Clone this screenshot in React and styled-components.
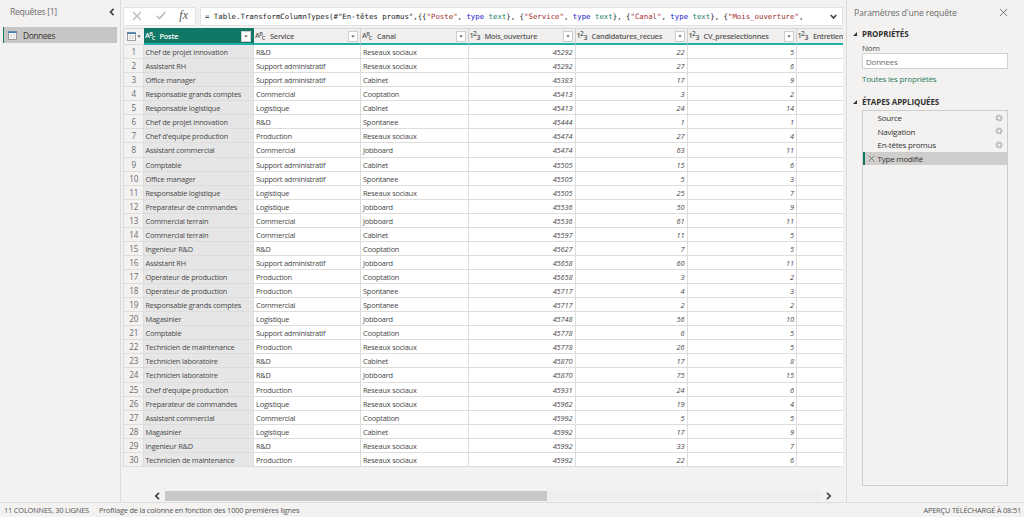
import React from 'react';
import styled, { createGlobalStyle } from 'styled-components';

const GlobalStyle = createGlobalStyle`
	* { box-sizing: border-box; }
	body {
		margin: 0;
		background: #f3f2f1;
		color: #484848;
		font-family: 'Open Sans', 'Noto Sans', sans-serif;
		font-size: 7.4px;
		overflow: hidden;
	}
`

const Window = styled.div`
	display: flex;
	flex-direction: column;
	width: 1024px;
	height: 517px;
`

const Main = styled.div`
	display: flex;
	height: 503px;
	border-bottom: 1px solid #dedddc;
`

const Sidebar = styled.div`
	width: 121px;
	padding: 0 3px;
	border-right: 1px solid #dddcdb;
`

const SidebarTitle = styled.div`
	display: flex;
	justify-content: space-between;
	align-items: center;
	height: 26px;
	padding: 0 2px 2px 7px;
	font-size: 8.7px;
	letter-spacing: -0.33px;
	color: #6b6b6b;
`

const QueryItem = styled.div`
	display: flex;
	align-items: center;
	gap: 6px;
	height: 16px;
	margin-top: 1px;
	padding-left: 4px;
	border-left: 1px solid #117865;
	background: #c8c6c4;
	font-size: 8.3px;
	letter-spacing: -0.35px;
	color: #333;
`

const Center = styled.div`
	width: 726px;
	padding: 7px 3px 0 2px;
	border-right: 1px solid #dddcdb;
`

const FormulaBar = styled.div`
	display: flex;
	justify-content: space-between;
	height: 19px;
	margin-bottom: 2px;
`

const FormulaTools = styled.div`
	display: flex;
	align-items: center;
	justify-content: space-between;
	width: 73px;
	padding: 0 7px 2px 8px;
	border: 1px solid #e3e2e1;
	background: #fff;
	font: italic 12px 'Liberation Serif', serif;
	color: #555;
`

const Formula = styled.div`
	display: flex;
	align-items: center;
	justify-content: space-between;
	width: 643px;
	padding: 0 5px 1px 4px;
	border: 1px solid #e3e2e1;
	background: #fff;
	font-family: 'DejaVu Sans Mono', monospace;
	font-size: 7.36px;
	color: #222;
	white-space: pre;
`

const Token = styled.span`
	color: ${(props) => props.$color};
`

const Grid = styled.div`
	display: grid;
	grid-template-columns: 19.5px 110.5px 107px 107.5px 107px 112px 109.5px 47px;
	grid-template-rows: 17px repeat(30, 14.07px);
	width: 720px;
	overflow: hidden;
	border-left: 1px solid #dad9d8;
`

const HeadCell = styled.div`
	display: flex;
	align-items: center;
	gap: 4px;
	min-width: 0;
	overflow: hidden;
	padding: 0 2px 0 1px;
	border-top: 1px solid ${(props) => (props.$active ? '#117865' : '#dad9d8')};
	border-right: 1px solid ${(props) => (props.$active ? '#117865' : '#d2d1d0')};
	border-bottom: 2px solid #20b2a6;
	background: ${(props) => (props.$active ? '#117865' : '#f0efee')};
	color: ${(props) => (props.$active ? '#fff' : '#5a5a5a')};
	font-weight: 600;
	font-size: 7.3px;
	letter-spacing: ${(props) => props.$spacing || -0.17}px;
	white-space: nowrap;
`

const CornerCell = styled.div`
	display: flex;
	align-items: center;
	justify-content: center;
	gap: 1px;
	border-top: 1px solid #dad9d8;
	border-bottom: 1px solid #dad9d8;
`

const Filter = styled.div`
	display: flex;
	align-items: center;
	justify-content: center;
	flex: none;
	width: 10px;
	height: 11px;
	margin-left: auto;
	border: 1px solid #cfcecd;
	background: #fff;
`

const Cell = styled.div`
	overflow: hidden;
	padding: 0 2px;
	border-right: 1px solid #dedddc;
	border-bottom: 1px solid #dedddc;
	background: ${(props) => (props.$active ? '#e6e6e6' : '#fff')};
	line-height: 14px;
	letter-spacing: -0.21px;
	white-space: nowrap;
`

const NumberCell = styled(Cell)`
	font-style: italic;
	letter-spacing: -0.1px;
	text-align: right;
`

const RowNumber = styled(Cell)`
	padding: 0 0 0 1px;
	background: #f3f2f1;
	font-size: 8.1px;
	text-align: center;
	color: #6b6b6b;
`

const ScrollRow = styled.div`
	display: flex;
	align-items: center;
	gap: 5px;
	height: 10px;
	margin: 24px 11px 0 31px;
`

const Track = styled.div`
	flex: 1;
	height: 10px;
	background: #f0efee;
`

const Thumb = styled.div`
	width: 382px;
	height: 10px;
	background: #c9c8c8;
`

const Settings = styled.div`
	width: 177px;
	padding: 0 16px 0 6px;
`

const SettingsTitle = styled.div`
	display: flex;
	align-items: center;
	justify-content: space-between;
	height: 25px;
	padding-left: 1px;
	font-size: 8.7px;
	letter-spacing: -0.15px;
	color: #6b6b6b;
`

const SectionTitle = styled.div`
	display: flex;
	align-items: center;
	gap: 5px;
	height: ${(props) => props.$height || 17}px;
	margin-top: ${(props) => props.$top || 0}px;
	font-size: 8px;
	font-weight: 700;
	letter-spacing: -0.12px;
	color: #333;
`

const SectionBody = styled.div`
	padding-left: 9px;
	font-size: 8px;
	letter-spacing: -0.22px;
`

const Label = styled.div`
	line-height: 11px;
`

const Input = styled.div`
	width: 146px;
	height: 16px;
	padding-left: 3px;
	border: 1px solid #d2d1d0;
	background: #fff;
	line-height: 15px;
	color: #707070;
`

const Link = styled.div`
	margin-top: 3px;
	line-height: 14px;
	letter-spacing: -0.2px;
	color: #287a5e;
`

const Steps = styled.div`
	width: 146px;
	height: 376px;
	border: 1px solid #cfcecd;
`

const Step = styled.div`
	display: flex;
	align-items: center;
	height: 13.5px;
	padding: 0 4px 0 3px;
	border-left: 2px solid ${(props) => (props.$active ? '#117865' : 'transparent')};
	background: ${(props) => (props.$active ? '#cfcecd' : 'transparent')};
	color: #333;
	svg:last-child {
		margin-left: ${(props) => (props.$active ? 0 : 'auto')};
	}
`

const StepMark = styled.div`
	display: flex;
	width: 9.5px;
`

const StatusBar = styled.div`
	display: flex;
	align-items: center;
	gap: 10px;
	height: 14px;
	padding: 0 3px 0 4px;
	font-size: 7.4px;
	letter-spacing: -0.18px;
	color: #555;
	span:last-child {
		margin-left: auto;
	}
`

const columns = [
	{ name: 'Poste', type: 'text' },
	{ name: 'Service', type: 'text' },
	{ name: 'Canal', type: 'text' },
	{ name: 'Mois_ouverture', type: 'number' },
	{ name: 'Candidatures_recues', type: 'number' },
	{ name: 'CV_preselectionnes', type: 'number' },
];

const rows = [
	['Chef de projet innovation', 'R&D', 'Reseaux sociaux', 45292, 22, 5],
	['Assistant RH', 'Support administratif', 'Reseaux sociaux', 45292, 27, 6],
	['Office manager', 'Support administratif', 'Cabinet', 45383, 17, 9],
	['Responsable grands comptes', 'Commercial', 'Cooptation', 45413, 3, 2],
	['Responsable logistique', 'Logistique', 'Cabinet', 45413, 24, 14],
	['Chef de projet innovation', 'R&D', 'Spontanee', 45444, 1, 1],
	["Chef d'equipe production", 'Production', 'Reseaux sociaux', 45474, 27, 4],
	['Assistant commercial', 'Commercial', 'Jobboard', 45474, 63, 11],
	['Comptable', 'Support administratif', 'Cabinet', 45505, 15, 6],
	['Office manager', 'Support administratif', 'Spontanee', 45505, 5, 3],
	['Responsable logistique', 'Logistique', 'Reseaux sociaux', 45505, 25, 7],
	['Preparateur de commandes', 'Logistique', 'Jobboard', 45536, 50, 9],
	['Commercial terrain', 'Commercial', 'Jobboard', 45536, 61, 11],
	['Commercial terrain', 'Commercial', 'Cabinet', 45597, 11, 5],
	['Ingenieur R&D', 'R&D', 'Cooptation', 45627, 7, 5],
	['Assistant RH', 'Support administratif', 'Jobboard', 45658, 60, 11],
	['Operateur de production', 'Production', 'Cooptation', 45658, 3, 2],
	['Operateur de production', 'Production', 'Spontanee', 45717, 4, 3],
	['Responsable grands comptes', 'Commercial', 'Spontanee', 45717, 2, 2],
	['Magasinier', 'Logistique', 'Jobboard', 45748, 56, 10],
	['Comptable', 'Support administratif', 'Cooptation', 45778, 6, 5],
	['Technicien de maintenance', 'Production', 'Reseaux sociaux', 45778, 26, 5],
	['Technicien laboratoire', 'R&D', 'Cabinet', 45870, 17, 8],
	['Technicien laboratoire', 'R&D', 'Jobboard', 45870, 75, 15],
	["Chef d'equipe production", 'Production', 'Reseaux sociaux', 45931, 24, 6],
	['Preparateur de commandes', 'Logistique', 'Reseaux sociaux', 45962, 19, 4],
	['Assistant commercial', 'Commercial', 'Cooptation', 45992, 5, 5],
	['Magasinier', 'Logistique', 'Cabinet', 45992, 17, 9],
	['Ingenieur R&D', 'R&D', 'Reseaux sociaux', 45992, 33, 7],
	['Technicien de maintenance', 'Production', 'Reseaux sociaux', 45992, 22, 6],
];

const formula = [
	['= Table.TransformColumnTypes(#"En-têtes promus",{{'],
	['"Poste"', '#a33030'], [', '], ['type', '#2222c8'], [' text', '#2b8066'], ['}, {'],
	['"Service"', '#a33030'], [', '], ['type', '#2222c8'], [' text', '#2b8066'], ['}, {'],
	['"Canal"', '#a33030'], [', '], ['type', '#2222c8'], [' text', '#2b8066'], ['}, {'],
	['"Mois_ouverture"', '#a33030'], [','],
];

const TypeSvg = styled.svg`
	flex: none;
	font-family: 'Open Sans', sans-serif;
	font-weight: 600;
	letter-spacing: 0;
`

const TypeIcon = ({ type }) => {
	const text = type === 'text';
	const [a, b, c] = text ? ['A', 'B', 'C'] : ['1', '2', '3'];
	return (
		<TypeSvg width="11" height="12" viewBox="0 0 11 12" fill="currentColor">
			<text x={text ? 0 : -0.5} y="8.3" fontSize="7.3">{a}</text>
			<text x={text ? 4.3 : 3} y="6.3" fontSize={text ? 5.6 : 6.5}>{b}</text>
			<text x={text ? 6.8 : 6.5} y="10.3" fontSize={text ? 5.8 : 7}>{c}</text>
		</TypeSvg>
	);
};

const TableIcon = () => (
	<svg width="9" height="9" viewBox="0 0 9 9">
		<rect x="0.5" y="0.5" width="8" height="8" fill="#fff" stroke="#858585" strokeWidth="0.8" />
		<path d="M0.2 1.2H8.8" stroke="#4682b4" strokeWidth="1.6" />
		<path d="M3.2 2V8.5M5.9 2V8.5M0.5 4.2H8.5M0.5 6.3H8.5" stroke="#b5b5b5" strokeWidth="0.4" />
	</svg>
);

const Chevron = ({ d, width = 6, height = 8 }) => (
	<svg width={width} height={height} viewBox={`0 0 ${width} ${height}`} fill="none" stroke="#444" strokeWidth="1.7">
		<path d={d} />
	</svg>
);

const Arrow = () => (
	<svg width="4" height="3" viewBox="0 0 4 3"><path d="M0.2 0.5H3.8L2 2.5Z" fill="#555" /></svg>
);

const Cross = ({ size, color, width = 1 }) => (
	<svg width={size} height={size} viewBox="0 0 10 10" fill="none" stroke={color} strokeWidth={width}>
		<path d="M1 1L9 9M9 1L1 9" />
	</svg>
);

const Gear = () => (
	<svg width="8" height="8" viewBox="0 0 8 8" fill="none" stroke="#a5a5a5">
		<circle cx="4" cy="4" r="3" strokeWidth="1.1" strokeDasharray="1.25 1.106" />
		<circle cx="4" cy="4" r="2.1" strokeWidth="0.9" />
	</svg>
);

const Collapse = () => (
	<svg width="4" height="4" viewBox="0 0 4 4"><path d="M4 0V4H0Z" fill="#333" /></svg>
);

const App = () => {
	return (
		<Window>
			<GlobalStyle />
			<Main>
				<Sidebar>
					<SidebarTitle>
						Requêtes [1]
						<Chevron d="M4.6 0.8L1.5 4L4.6 7.2" />
					</SidebarTitle>
					<QueryItem>
						<TableIcon />
						Donnees
					</QueryItem>
				</Sidebar>
				<Center>
					<FormulaBar>
						<FormulaTools>
							<Cross size={10} color="#bbb" width={1.3} />
							<svg width="10" height="9" viewBox="0 0 10 9" fill="none" stroke="#bbb" strokeWidth="1.6"><path d="M0.7 4.8L3.5 7.5L9.3 1" /></svg>
							<span>fx</span>
						</FormulaTools>
						<Formula>
							<span>
								{formula.map(([text, color], i) => (
									<Token key={i} $color={color || '#222'}>{text}</Token>
								))}
							</span>
							<Chevron d="M0.7 1L3.5 4L6.3 1" width={7} height={5} />
						</Formula>
					</FormulaBar>
					<Grid>
						<CornerCell>
							<TableIcon />
							<Arrow />
						</CornerCell>
						{columns.map((column, i) => (
							<HeadCell key={column.name} $active={i === 0}>
								<TypeIcon type={column.type} />
								{column.name}
								<Filter><Arrow /></Filter>
							</HeadCell>
						))}
						<HeadCell $spacing={-0.3}>
							<TypeIcon type="number" />
							Entretien
						</HeadCell>
						{rows.map((row, i) => (
							<React.Fragment key={i}>
								<RowNumber>{i + 1}</RowNumber>
								<Cell $active>{row[0]}</Cell>
								<Cell>{row[1]}</Cell>
								<Cell>{row[2]}</Cell>
								<NumberCell>{row[3]}</NumberCell>
								<NumberCell>{row[4]}</NumberCell>
								<NumberCell>{row[5]}</NumberCell>
								<Cell />
							</React.Fragment>
						))}
					</Grid>
					<ScrollRow>
						<Chevron d="M5 0.8L1.8 4L5 7.2" />
						<Track><Thumb /></Track>
						<Chevron d="M1 0.8L4.2 4L1 7.2" />
					</ScrollRow>
				</Center>
				<Settings>
					<SettingsTitle>
						Paramètres d'une requête
						<Cross size={9} color="#666" />
					</SettingsTitle>
					<SectionTitle>
						<Collapse />
						PROPRIÉTÉS
					</SectionTitle>
					<SectionBody>
						<Label>Nom</Label>
						<Input>Donnees</Input>
						<Link>Toutes les propriétés</Link>
					</SectionBody>
					<SectionTitle $top={7}>
						<Collapse />
						ÉTAPES APPLIQUÉES
					</SectionTitle>
					<SectionBody>
						<Steps>
							<Step><StepMark />Source<Gear /></Step>
							<Step><StepMark />Navigation<Gear /></Step>
							<Step><StepMark />En-têtes promus<Gear /></Step>
							<Step $active><StepMark><Cross size={7} color="#555" /></StepMark>Type modifié</Step>
						</Steps>
					</SectionBody>
				</Settings>
			</Main>
			<StatusBar>
				<span>11 COLONNES, 30 LIGNES</span>
				<span>Profilage de la colonne en fonction des 1000 premières lignes</span>
				<span>APERÇU TÉLÉCHARGÉ À 08:51</span>
			</StatusBar>
		</Window>
	);
};

export default App;
